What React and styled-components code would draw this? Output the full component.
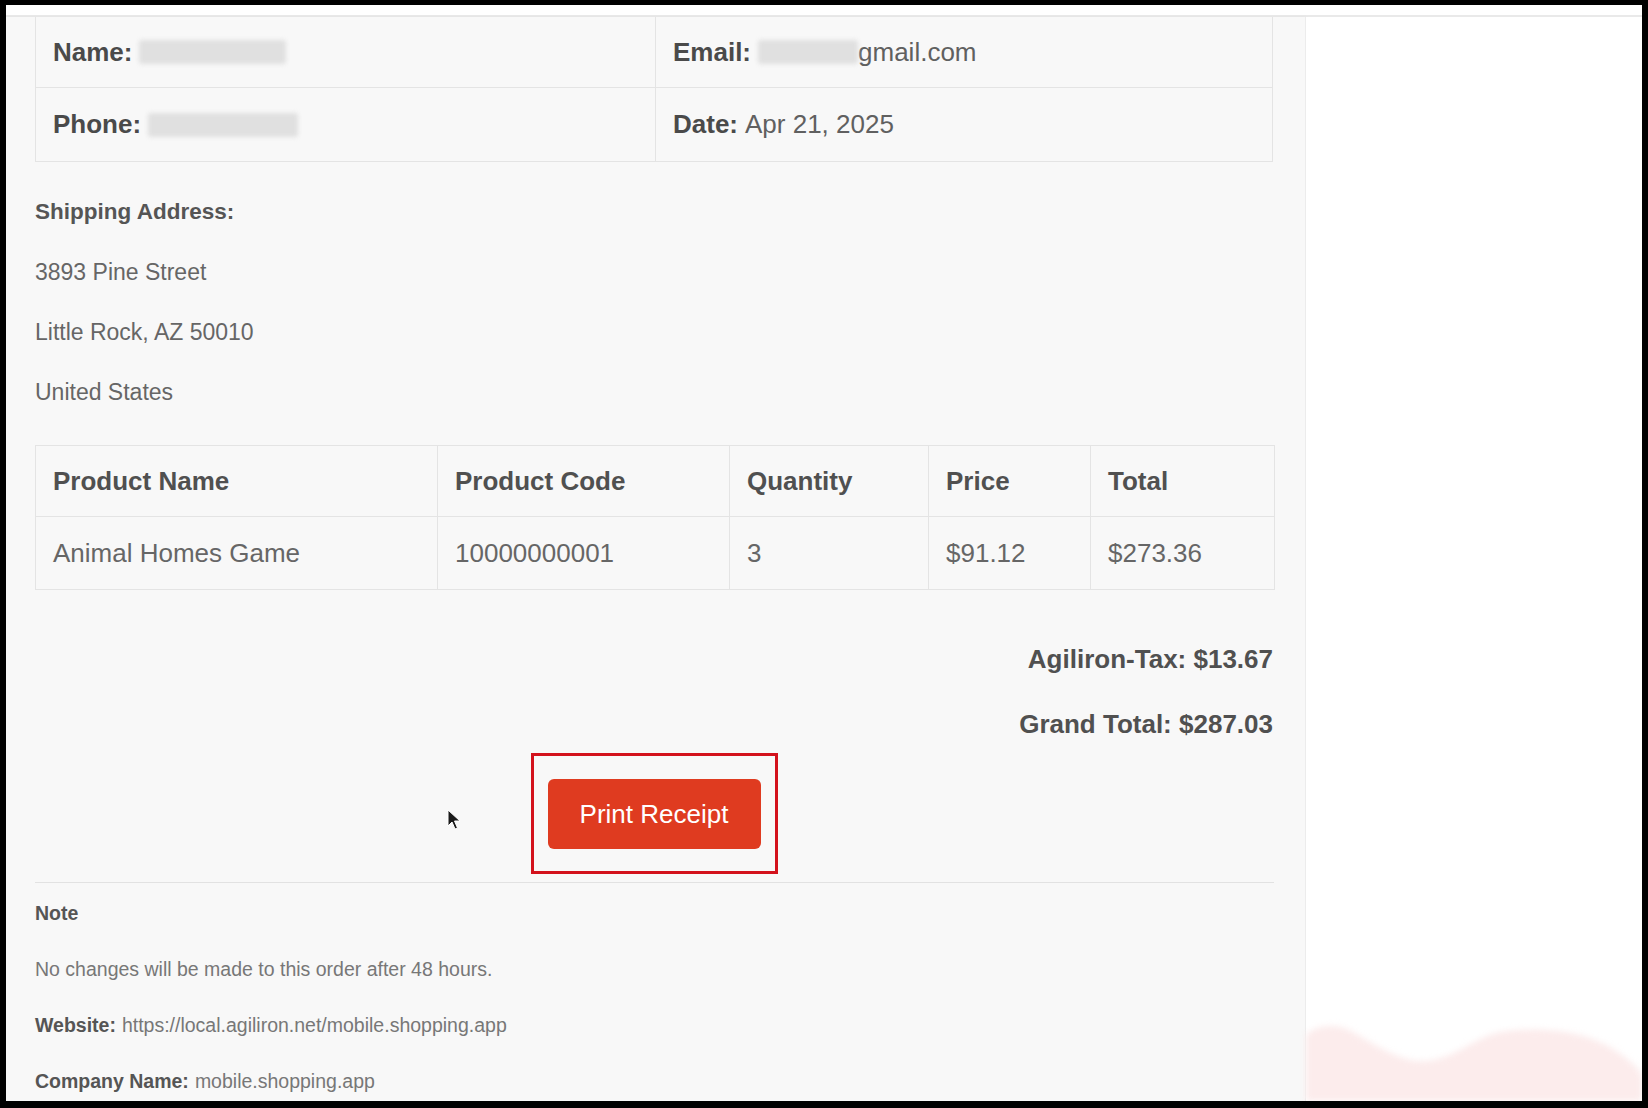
import React from "react";
import styled, { createGlobalStyle } from "styled-components";

const GlobalStyle = createGlobalStyle`
  html, body {
    margin: 0;
    padding: 0;
    background: #000;
  }
  body {
    font-family: "Liberation Sans", Arial, sans-serif;
  }
`;

const Frame = styled.div`
  width: 1648px;
  height: 1108px;
  box-sizing: border-box;
  padding: 5px 6px 7px 6px;
  background: #000;
`;

const Screen = styled.div`
  height: 100%;
  background: #fff;
  display: flex;
  flex-direction: column;
  overflow: hidden;
`;

const TopStrip = styled.div`
  height: 10px;
  flex-shrink: 0;
  background: #fff;
  border-bottom: 2px solid #e9e9e9;
`;

const Body = styled.div`
  flex: 1;
  display: flex;
  min-height: 0;
`;

const Panel = styled.div`
  width: 1300px;
  flex-shrink: 0;
  box-sizing: border-box;
  padding: 0 32px 0 29px;
  background: #f8f8f8;
  border-right: 1px solid #ececec;
  box-shadow: 1px 0 3px rgba(0, 0, 0, 0.03);
  display: flex;
  flex-direction: column;
`;

const Side = styled.div`
  flex: 1;
  background: #fff;
  display: flex;
  flex-direction: column;
  justify-content: flex-end;
`;

const Wave = styled.svg`
  display: block;
  width: 100%;
  height: 80px;
  filter: blur(3px);
`;

const InfoGrid = styled.div`
  display: grid;
  grid-template-columns: 620px 1fr;
  border-left: 1px solid #e4e4e4;
  border-right: 1px solid #e4e4e4;
  border-bottom: 1px solid #e4e4e4;
`;

const InfoCell = styled.div`
  height: ${(p) => p.$h}px;
  box-sizing: border-box;
  display: flex;
  align-items: center;
  padding-left: 17px;
  font-size: 26px;
  color: #606060;
  border-right: ${(p) => (p.$last ? "none" : "1px solid #e4e4e4")};
  border-bottom: ${(p) => (p.$top ? "1px solid #e4e4e4" : "none")};
  white-space: nowrap;
`;

const Label = styled.b`
  font-weight: 700;
  color: #4a4a4a;
  margin-right: 7px;
`;

const Blur = styled.span`
  display: inline-block;
  width: ${(p) => p.$w}px;
  height: 24px;
  background: #e0e0e0;
  filter: blur(2px);
  border-radius: 3px;
`;

const Address = styled.div`
  display: flex;
  flex-direction: column;
  gap: 36px;
  margin-top: 38px;
`;

const AddressHead = styled.div`
  font-size: 22.5px;
  line-height: 24px;
  font-weight: 700;
  color: #555;
`;

const AddressLine = styled.div`
  font-size: 23px;
  line-height: 24px;
  color: #666;
`;

const Table = styled.table`
  margin-top: 41px;
  width: 1239px;
  border-collapse: collapse;
  table-layout: fixed;
  font-size: 26px;
`;

const Th = styled.th`
  box-sizing: border-box;
  height: 71px;
  padding: 0 0 0 17px;
  text-align: left;
  font-weight: 700;
  color: #505050;
  border: 1px solid #e4e4e4;
  width: ${(p) => p.$w}px;
`;

const Td = styled.td`
  height: 72px;
  padding: 0 0 0 17px;
  color: #666;
  border: 1px solid #e4e4e4;
`;

const Totals = styled.div`
  margin-top: 55px;
  display: flex;
  flex-direction: column;
  align-items: flex-end;
  gap: 37px;
`;

const TotalLine = styled.div`
  font-size: 26px;
  line-height: 28px;
  font-weight: 700;
  color: #505050;
`;

const ButtonRow = styled.div`
  position: relative;
  display: flex;
  justify-content: center;
  margin-top: 15px;
`;

const Highlight = styled.div`
  border: 3px solid #d3121c;
  padding: 23px 14px 22px 14px;
`;

const PrintButton = styled.button`
  display: block;
  width: 213px;
  height: 70px;
  border: none;
  border-radius: 6px;
  background: #df3b20;
  color: #fff;
  font-family: "Liberation Sans", Arial, sans-serif;
  font-size: 26px;
  cursor: pointer;
`;

const Cursor = styled.svg`
  position: absolute;
  left: 412px;
  top: 56px;
  width: 14px;
  height: 22px;
`;

const Divider = styled.hr`
  margin: 8px 0 0 0;
  border: none;
  border-top: 1px solid #e2e2e2;
  width: 1239px;
`;

const Footer = styled.div`
  display: flex;
  flex-direction: column;
  gap: 34px;
  margin-top: 19px;
`;

const FootLine = styled.div`
  font-size: 19.5px;
  line-height: 22px;
  color: #777;
  white-space: nowrap;
`;

const FootLabel = styled.b`
  font-weight: 700;
  color: #555;
  margin-right: 6px;
`;

const rows = [
  { name: "Animal Homes Game", code: "10000000001", qty: "3", price: "$91.12", total: "$273.36" },
];

const App = () => {
  return (
    <>
      <GlobalStyle />
      <Frame>
        <Screen>
          <TopStrip />
          <Body>
            <Panel>
              <InfoGrid>
                <InfoCell $h={71} $top>
                  <Label>Name:</Label>
                  <Blur $w={147} />
                </InfoCell>
                <InfoCell $h={71} $top $last>
                  <Label>Email:</Label>
                  <Blur $w={100} />
                  gmail.com
                </InfoCell>
                <InfoCell $h={73}>
                  <Label>Phone:</Label>
                  <Blur $w={150} />
                </InfoCell>
                <InfoCell $h={73} $last>
                  <Label>Date:</Label>
                  Apr 21, 2025
                </InfoCell>
              </InfoGrid>

              <Address>
                <AddressHead>Shipping Address:</AddressHead>
                <AddressLine>3893 Pine Street</AddressLine>
                <AddressLine>Little Rock, AZ 50010</AddressLine>
                <AddressLine>United States</AddressLine>
              </Address>

              <Table>
                <thead>
                  <tr>
                    <Th $w={402}>Product Name</Th>
                    <Th $w={292}>Product Code</Th>
                    <Th $w={199}>Quantity</Th>
                    <Th $w={162}>Price</Th>
                    <Th $w={184}>Total</Th>
                  </tr>
                </thead>
                <tbody>
                  {rows.map((r) => (
                    <tr key={r.code}>
                      <Td>{r.name}</Td>
                      <Td>{r.code}</Td>
                      <Td>{r.qty}</Td>
                      <Td>{r.price}</Td>
                      <Td>{r.total}</Td>
                    </tr>
                  ))}
                </tbody>
              </Table>

              <Totals>
                <TotalLine>Agiliron-Tax: $13.67</TotalLine>
                <TotalLine>Grand Total: $287.03</TotalLine>
              </Totals>

              <ButtonRow>
                <Highlight>
                  <PrintButton>Print Receipt</PrintButton>
                </Highlight>
                <Cursor viewBox="0 0 14 22">
                  <path
                    d="M1 1 L1 17 L5 13 L8 20 L10.5 19 L7.5 12 L13 12 Z"
                    fill="#1a1a1a"
                    stroke="#fff"
                    strokeWidth="1"
                  />
                </Cursor>
              </ButtonRow>

              <Divider />

              <Footer>
                <FootLine>
                  <FootLabel>Note</FootLabel>
                </FootLine>
                <FootLine>No changes will be made to this order after 48 hours.</FootLine>
                <FootLine>
                  <FootLabel>Website:</FootLabel>
                  https://local.agiliron.net/mobile.shopping.app
                </FootLine>
                <FootLine>
                  <FootLabel>Company Name:</FootLabel>
                  mobile.shopping.app
                </FootLine>
              </Footer>
            </Panel>
            <Side>
              <Wave viewBox="0 0 336 80" preserveAspectRatio="none">
                <path
                  d="M0 14 C 10 4, 30 2, 45 10 C 70 24, 95 42, 120 40 C 150 38, 170 14, 200 10 C 240 6, 280 10, 310 30 C 325 40, 336 50, 336 56 L 336 80 L 0 80 Z"
                  fill="#fcecec"
                />
              </Wave>
            </Side>
          </Body>
        </Screen>
      </Frame>
    </>
  );
};

export default App;
